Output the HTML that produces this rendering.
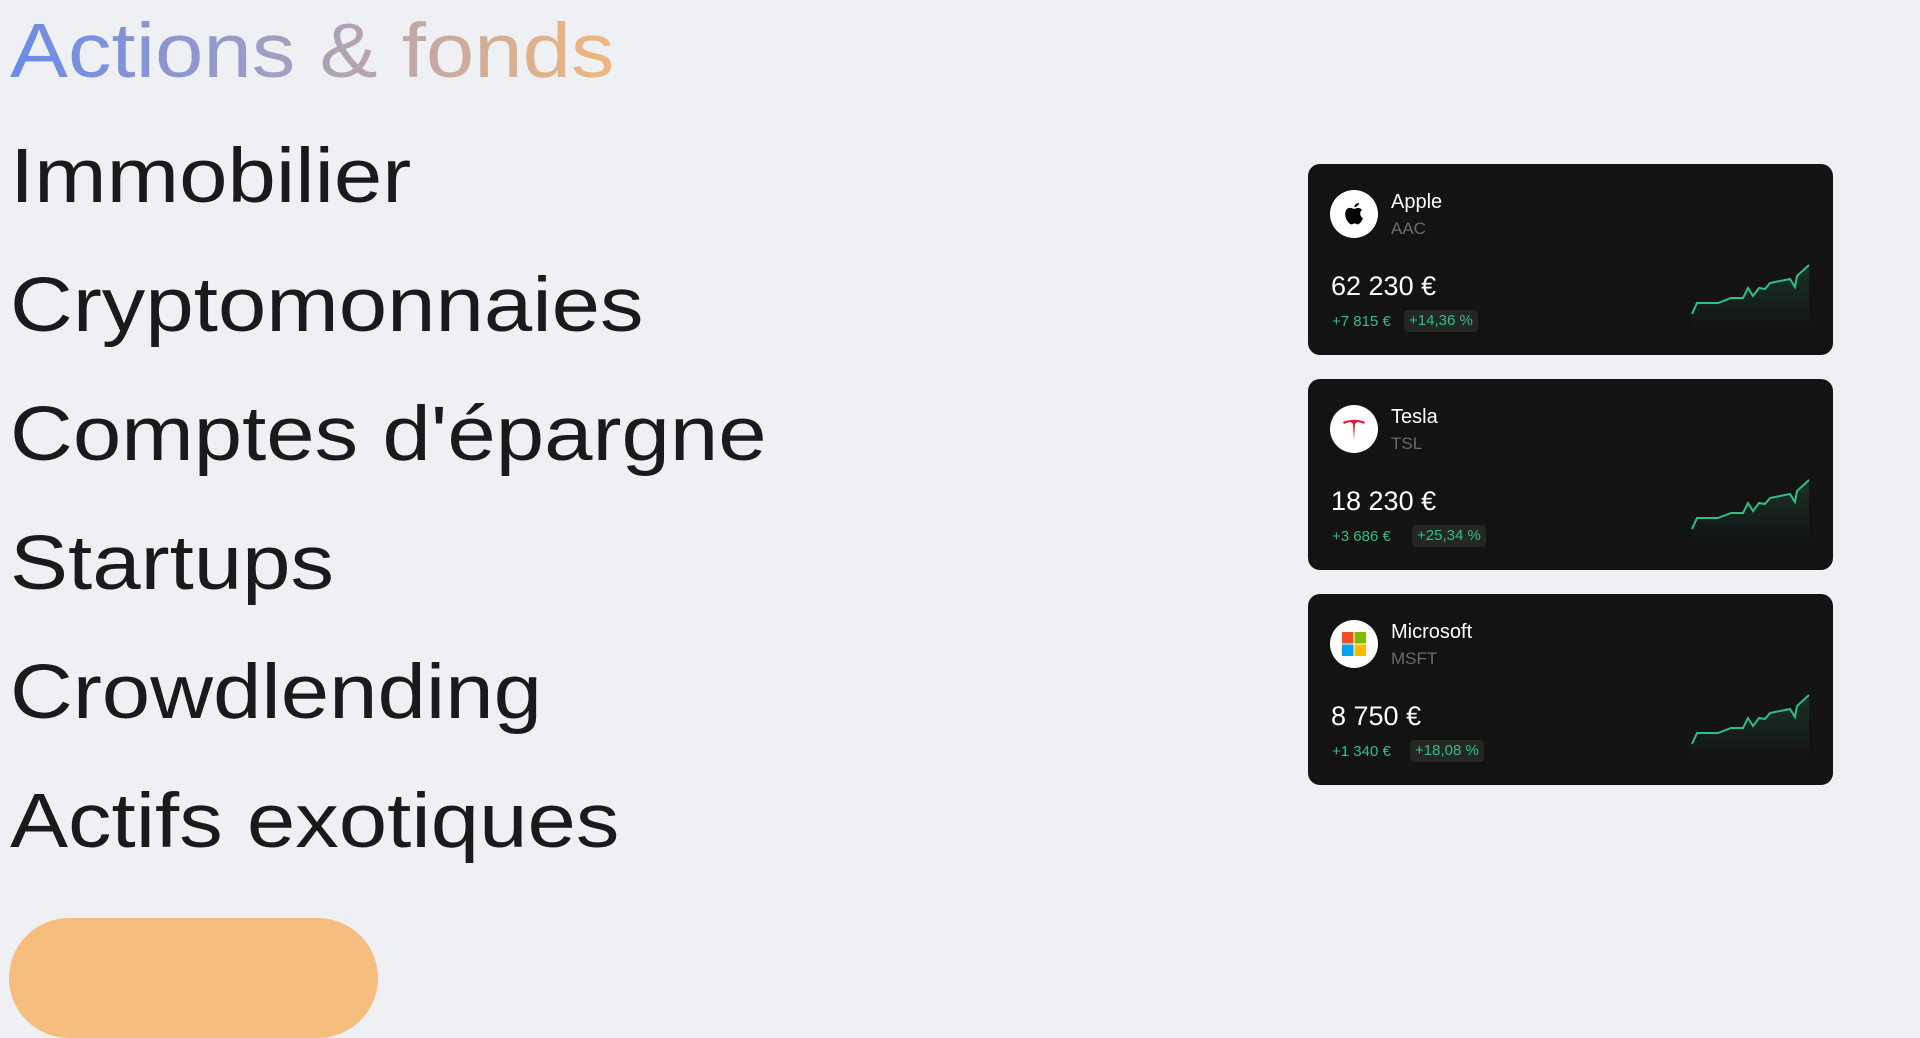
<!DOCTYPE html>
<html><head><meta charset="utf-8"><style>
html,body{margin:0;padding:0;background:#eff0f4;width:1920px;height:960px;overflow:hidden;font-family:"Liberation Sans",sans-serif}
.t{position:absolute;left:10px;font-size:77px;line-height:1;color:#1a1a1a;transform:scaleX(1.13);transform-origin:left top;white-space:nowrap}
.g{background:linear-gradient(90deg,#6a8be8,#a9a1bb 50%,#f0b77c);-webkit-background-clip:text;background-clip:text;color:transparent}
.btn{position:absolute;left:9px;top:918px;width:369px;height:120px;border-radius:60px;background:#f5be7f}
.card{position:absolute;left:1308px;width:525px;height:191px;background:#131313;border-radius:12px;color:#fff}
.logo{position:absolute;left:22px;top:26px;width:48px;height:48px;border-radius:50%;background:#fff}
.nm{position:absolute;left:83px;top:27px;font-size:20px}
.tk{position:absolute;left:83px;top:55px;font-size:17px;color:#6b6b6b}
.pr{position:absolute;left:23px;top:107px;font-size:27px}
.ch{position:absolute;left:24px;top:149px;font-size:15px;color:#2fbf85}
.bd{position:absolute;left:96px;top:146px;height:22px;line-height:22px;padding:0 5px;background:#252725;border-radius:4px;font-size:15px;color:#2fbf85}
svg.c{position:absolute;left:0;top:0}
</style></head><body>
<div class="t g" style="top:13px">Actions &amp; fonds</div>
<div class="t" style="top:138px">Immobilier</div>
<div class="t" style="top:267px">Cryptomonnaies</div>
<div class="t" style="top:396px">Comptes d'épargne</div>
<div class="t" style="top:525px">Startups</div>
<div class="t" style="top:654px">Crowdlending</div>
<div class="t" style="top:783px">Actifs exotiques</div>
<div class="btn"></div>

<svg width="0" height="0" style="position:absolute"><defs><linearGradient id="fg" x1="0" y1="0" x2="0" y2="1"><stop offset="0" stop-color="#2fbf85" stop-opacity=".18"/><stop offset="1" stop-color="#2fbf85" stop-opacity="0"/></linearGradient></defs></svg>

<div class="card" style="top:164px">
<div class="logo"><svg width="48" height="48" viewBox="0 0 48 48"><path d="M24 17c1-3 3-4 5-4 0 2-2 4-5 4z" fill="#000"/><path d="M24 19c-2-1-5-2-7 0-3 3-2 9 1 13 2 2 3 3 5 2 1-1 2-1 3 0 2 1 3 0 5-2 1-2 2-3 2-4-3-1-4-6-1-8-2-3-5-2-8-1z" fill="#000"/></svg></div>
<div class="nm">Apple</div><div class="tk">AAC</div>
<div class="pr">62 230 €</div>
<div class="ch">+7 815 €</div><div class="bd">+14,36 %</div>
<svg class="c" width="525" height="191"><path d="M384 150L389 139L410 139L423 134L435 134L440 124L445 132L451 124L457 125L462 119L482 115L487 123L489 112L501 101L501 165L384 165Z" fill="url(#fg)"/><path d="M384 150L389 139L410 139L423 134L435 134L440 124L445 132L451 124L457 125L462 119L482 115L487 123L489 112L501 101" fill="none" stroke="#2fbf85" stroke-width="2"/></svg>
</div>

<div class="card" style="top:379px">
<div class="logo"><svg width="48" height="48" viewBox="0 0 48 48"><path d="M13 17c6-3 16-3 22 0l-1 2c-2-1-5-2-7-2l-2 2-1 16-1-16-2-2c-2 0-5 1-7 2z" fill="#e31937"/></svg></div>
<div class="nm">Tesla</div><div class="tk">TSL</div>
<div class="pr">18 230 €</div>
<div class="ch">+3 686 €</div><div class="bd" style="left:104px">+25,34 %</div>
<svg class="c" width="525" height="191"><path d="M384 150L389 139L410 139L423 134L435 134L440 124L445 132L451 124L457 125L462 119L482 115L487 123L489 112L501 101L501 165L384 165Z" fill="url(#fg)"/><path d="M384 150L389 139L410 139L423 134L435 134L440 124L445 132L451 124L457 125L462 119L482 115L487 123L489 112L501 101" fill="none" stroke="#2fbf85" stroke-width="2"/></svg>
</div>

<div class="card" style="top:594px">
<div class="logo"><svg width="48" height="48" viewBox="0 0 48 48"><rect x="12" y="12" width="11.5" height="11.5" fill="#f25022"/><rect x="24.5" y="12" width="11.5" height="11.5" fill="#7fba00"/><rect x="12" y="24.5" width="11.5" height="11.5" fill="#00a4ef"/><rect x="24.5" y="24.5" width="11.5" height="11.5" fill="#ffb900"/></svg></div>
<div class="nm">Microsoft</div><div class="tk">MSFT</div>
<div class="pr">8 750 €</div>
<div class="ch">+1 340 €</div><div class="bd" style="left:102px">+18,08 %</div>
<svg class="c" width="525" height="191"><path d="M384 150L389 139L410 139L423 134L435 134L440 124L445 132L451 124L457 125L462 119L482 115L487 123L489 112L501 101L501 165L384 165Z" fill="url(#fg)"/><path d="M384 150L389 139L410 139L423 134L435 134L440 124L445 132L451 124L457 125L462 119L482 115L487 123L489 112L501 101" fill="none" stroke="#2fbf85" stroke-width="2"/></svg>
</div>
</body></html>
